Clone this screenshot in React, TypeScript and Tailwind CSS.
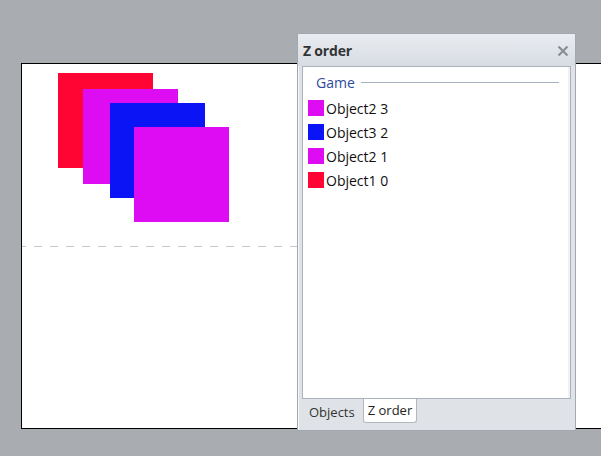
import React from "react";

type Item = { name: string; color: string };

const items: Item[] = [
  { name: "Object2 3", color: "bg-[#dd0cf2]" },
  { name: "Object3 2", color: "bg-[#0a14f5]" },
  { name: "Object2 1", color: "bg-[#dd0cf2]" },
  { name: "Object1 0", color: "bg-[#fe0533]" },
];

const font = { fontFamily: '"Open Sans", "Noto Sans", sans-serif' };

export default function App() {
  return (
    <div className="relative w-[601px] h-[456px] overflow-hidden bg-[#a9acb0]" style={font}>
      {/* scene canvas */}
      <div className="relative ml-[21px] mt-[63px] w-[620px] h-[366px] bg-white border border-black">
        <div className="absolute left-[36px] top-[9px] w-[95px] h-[95px] bg-[#fe0533]" />
        <div className="absolute left-[61px] top-[25px] w-[95px] h-[95px] bg-[#dd0cf2]" />
        <div className="absolute left-[88px] top-[39px] w-[95px] h-[95px] bg-[#0a14f5]" />
        <div className="absolute left-[112px] top-[63px] w-[95px] h-[95px] bg-[#dd0cf2]" />
        <div className="absolute left-0 top-[182px] w-[280px] h-px bg-[repeating-linear-gradient(90deg,#c8c8c8_0_4px,transparent_4px_12px,#c8c8c8_12px_16px)]" />
      </div>

      {/* floating z order panel */}
      <div className="absolute left-[297px] top-[33px] w-[279px] h-[398px] flex flex-col border border-[#a3a8ae] bg-[#dfe3e8] shadow-[inset_1px_1px_0_#f6f8fa]">
        <div className="h-[32px] flex items-center justify-between pl-[5px] pr-[6px] bg-[linear-gradient(#e9ecf0,#d8dde4)]">
          <span className="text-[14px] font-bold text-[#333] tracking-[-0.2px]">Z order</span>
          <svg width="12" height="12" viewBox="0 0 12 12" className="mt-[1px]">
            <path d="M1.5 1.5 L10.5 10.5 M10.5 1.5 L1.5 10.5" stroke="#8a8f96" strokeWidth="2.2" />
          </svg>
        </div>
        <div className="mx-[4px] h-[333px] bg-white border border-[#a9b2bd] shadow-[inset_-2px_0_0_#eef1f6]">
          <div className="flex items-center pl-[13px] pr-[11px] mt-[4px] h-[22px]">
            <span className="text-[14px] text-[#2c4a9c]">Game</span>
            <div className="flex-1 h-px bg-[#a8b2c3] ml-[6px]" />
          </div>
          <div className="flex flex-col mt-[3px]">
            {items.map((it, i) => (
              <div key={i} className="flex items-center h-[24px] pl-[5px]">
                <div className={`w-[16px] h-[16px] ${it.color}`} />
                <span className="ml-[2px] text-[14px] text-[#111]">{it.name}</span>
              </div>
            ))}
          </div>
        </div>
        <div className="flex items-start pl-[5px] h-[30px]">
          <div className="px-[6px] pt-[4px] text-[13px] text-[#333]">Objects</div>
          <div className="ml-[2px] px-[4px] h-[24px] flex items-center bg-white border border-t-0 border-[#b4b8bd] rounded-b-[3px] text-[13px] text-[#222]">
            Z order
          </div>
        </div>
      </div>
    </div>
  );
}
